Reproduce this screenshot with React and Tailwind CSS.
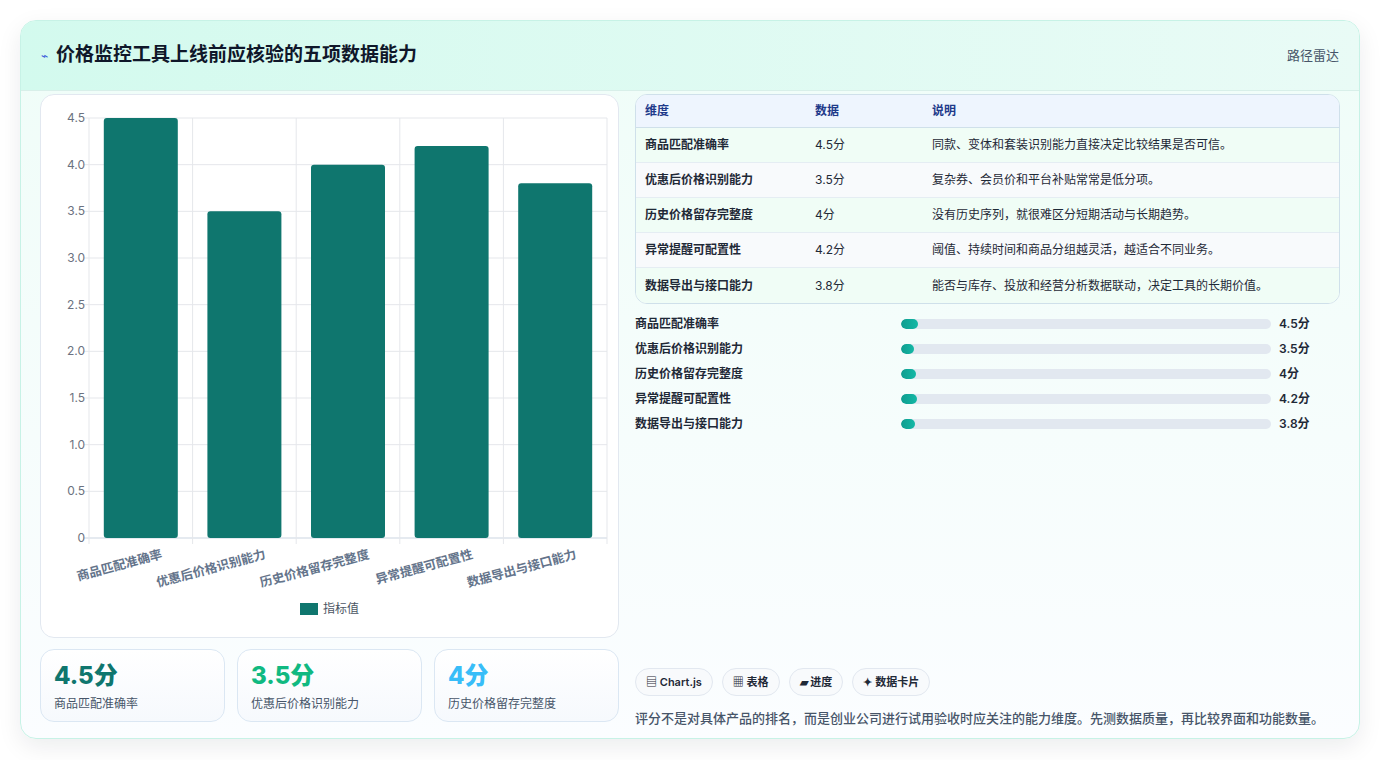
import React from "react";

const data = [
  ["商品匹配准确率", 4.5, "4.5分", "同款、变体和套装识别能力直接决定比较结果是否可信。"],
  ["优惠后价格识别能力", 3.5, "3.5分", "复杂券、会员价和平台补贴常常是低分项。"],
  ["历史价格留存完整度", 4, "4分", "没有历史序列，就很难区分短期活动与长期趋势。"],
  ["异常提醒可配置性", 4.2, "4.2分", "阈值、持续时间和商品分组越灵活，越适合不同业务。"],
  ["数据导出与接口能力", 3.8, "3.8分", "能否与库存、投放和经营分析数据联动，决定工具的长期价值。"],
];

function Chart() {
  const x0 = 48, x1 = 566, y0 = 23, y1 = 443;
  const h = y1 - y0;
  const step = (x1 - x0) / 5;
  const ticks = [0, 0.5, 1, 1.5, 2, 2.5, 3, 3.5, 4, 4.5];
  return (
    <svg width="578" height="543" className="block">
      {ticks.map((t) => {
        const y = y1 - (t / 4.5) * h;
        return (
          <g key={t}>
            <line x1={x0 - 6} x2={x1} y1={y} y2={y} stroke={t === 0 ? "#cbd5e1" : "#e5e7eb"} />
            <text x={x0 - 4} y={y + 4} textAnchor="end" fontSize="12" fill="#6b7280">
              {t === 0 ? "0" : t.toFixed(1)}
            </text>
          </g>
        );
      })}
      {[0, 1, 2, 3, 4, 5].map((i) => (
        <line key={i} x1={x0 + i * step} x2={x0 + i * step} y1={y0} y2={y1 + 6} stroke="#e5e7eb" />
      ))}
      {data.map((d, i) => {
        const bh = (d[1] / 4.5) * h;
        const cx = x0 + i * step + step / 2;
        return (
          <g key={i}>
            <rect x={cx - 37} y={y1 - bh} width="74" height={bh} rx="3" fill="#0f766e" />
            <text
              x={cx + 22}
              y={y1 + 20}
              textAnchor="end"
              fontSize="12.5"
              fontWeight="600"
              fill="#64748b"
              transform={`rotate(-15 ${cx + 22} ${y1 + 20})`}
            >
              {d[0]}
            </text>
          </g>
        );
      })}
      <rect x="259" y="508" width="18" height="12" fill="#0f766e" />
      <text x="282" y="518" fontSize="12" fill="#4b5563">指标值</text>
    </svg>
  );
}

export default function App() {
  const colors = ["text-[#0f766e]", "text-[#10b981]", "text-[#38bdf8]"];
  return (
    <div
      className="w-[1381px] h-[760px] bg-white p-[20px] pb-[20px]"
      style={{ fontFamily: 'Inter, "Noto Sans CJK SC", sans-serif' }}
    >
      <div className="h-[719px] w-[1340px] rounded-[16px] border border-[#c7f2e6] shadow-[0_8px_24px_rgba(15,23,42,0.08)] overflow-hidden bg-gradient-to-b from-[#effdf8] to-[#fbfdff] flex flex-col">
        <div className="h-[70px] shrink-0 bg-gradient-to-r from-[#d3faee] to-[#e9fbf6] border-b border-[#d8efe9] flex items-center justify-between px-[20px]">
          <div className="flex items-center gap-[8px]">
            <span className="text-[#3b5bdb] text-[12px]">⌁</span>
            <h1 className="text-[19px] font-bold text-[#0f172a]">价格监控工具上线前应核验的五项数据能力</h1>
          </div>
          <span className="text-[13px] text-[#475569]">路径雷达</span>
        </div>
        <div className="flex gap-[16px] px-[19px] pt-[3px]">
          <div className="w-[579px] flex flex-col gap-[11px]">
            <div className="h-[544px] rounded-[14px] border border-[#e2e8f0] bg-white overflow-hidden">
              <Chart />
            </div>
            <div className="grid grid-cols-3 gap-[12px]">
              {data.slice(0, 3).map((d, i) => (
                <div key={i} className="h-[73px] rounded-[14px] border border-[#dbe7f3] bg-gradient-to-b from-white to-[#f6f9fd] px-[13px] pt-[11px]">
                  <div className={`text-[24px] font-extrabold leading-[30px] ${colors[i]}`}>{d[2]}</div>
                  <div className="text-[12px] text-[#475569] mt-[4px]">{d[0]}</div>
                </div>
              ))}
            </div>
          </div>
          <div className="flex-1 flex flex-col">
            <div className="rounded-[12px] border border-[#cfe0ea] overflow-hidden bg-white text-[12px]">
              <div className="flex h-[33px] items-center bg-[#eef5fe] border-b border-[#cfe0ea] font-semibold text-[#1e3a8a]">
                <div className="w-[179px] pl-[9px]">维度</div>
                <div className="w-[117px]">数据</div>
                <div>说明</div>
              </div>
              {data.map((d, i) => (
                <div key={i} className={`flex h-[35px] items-center text-[#1f2937] ${i < 4 ? "border-b border-[#e5edf3]" : ""} ${i % 2 === 0 ? "bg-[#f0fdf6]" : "bg-[#f8fafc]"}`}>
                  <div className="w-[179px] pl-[9px] font-semibold">{d[0]}</div>
                  <div className="w-[117px]">{d[2]}</div>
                  <div>{d[3]}</div>
                </div>
              ))}
            </div>
            <div className="mt-[11px] flex flex-col gap-[7px] text-[12px] font-semibold text-[#1f2937]">
              {data.map((d, i) => (
                <div key={i} className="flex items-center h-[18px]">
                  <div className="w-[266px]">{d[0]}</div>
                  <div className="w-[370px] h-[10px] rounded-full bg-[#e2e8f0] overflow-hidden">
                    <div className="h-full rounded-full bg-gradient-to-r from-[#0f9d8f] to-[#14b8a6]" style={{ width: `${d[1] * 1}%` }} />
                  </div>
                  <div className="ml-[8px]">{d[2]}</div>
                </div>
              ))}
            </div>
            <div className="mt-[235px] flex gap-[9px] text-[11px] font-semibold text-[#1f2937]">
              {["▤ Chart.js", "▦ 表格", "▰ 进度", "✦ 数据卡片"].map((c) => (
                <span key={c} className="h-[28px] px-[10px] rounded-full border border-[#e2e8f0] bg-[#f8fafc] flex items-center">{c}</span>
              ))}
            </div>
            <p className="mt-[13px] text-[13px] text-[#475569] font-medium">
              评分不是对具体产品的排名，而是创业公司进行试用验收时应关注的能力维度。先测数据质量，再比较界面和功能数量。
            </p>
          </div>
        </div>
      </div>
    </div>
  );
}
